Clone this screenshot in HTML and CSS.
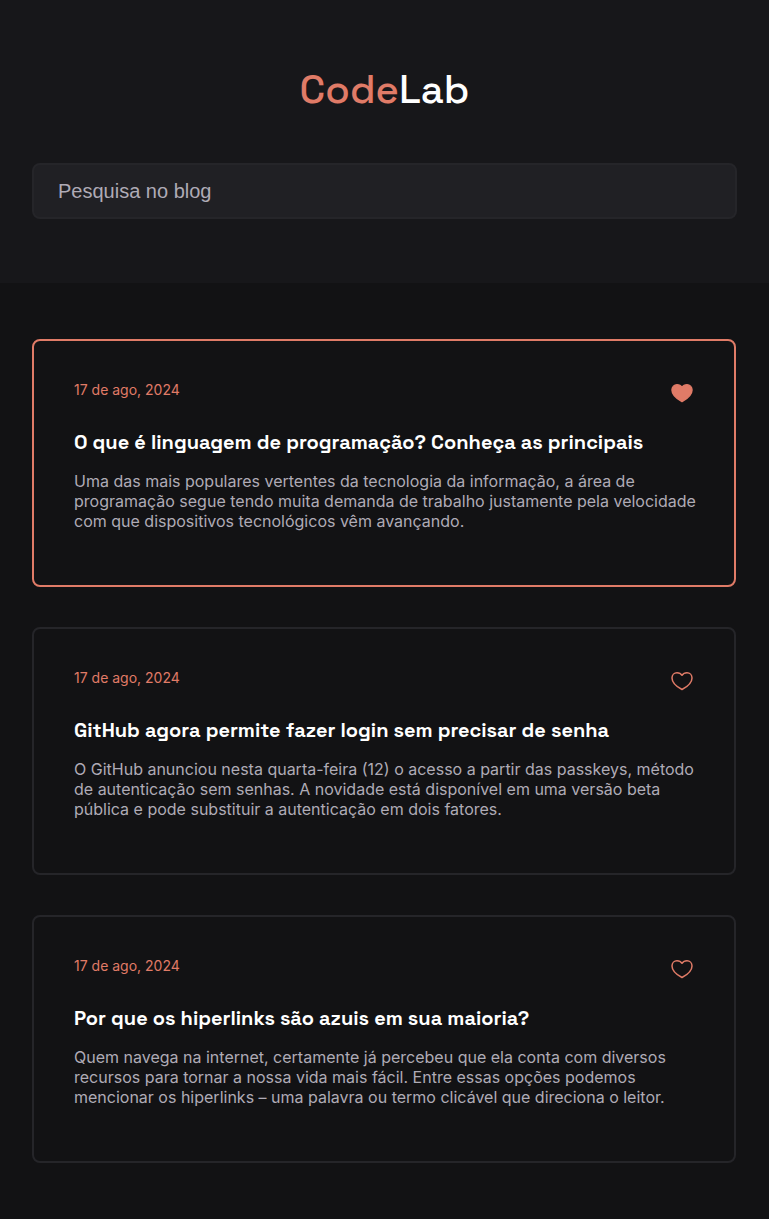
FILE: index.html
```html
<!DOCTYPE html>
<html lang="pt-BR">
<head>
<meta charset="utf-8">
<meta name="viewport" content="width=device-width, initial-scale=1">
<title>CodeLab</title>
<link rel="stylesheet" href="styles.css">
</head>
<body>
<svg class="sprite" aria-hidden="true">
  <symbol id="heart" viewBox="0 0 24 24">
    <path d="M12 20.5C9.6 19.2 2 14.8 2 8.9C2 5.9 4.2 3.7 7 3.7C9.1 3.7 10.9 4.6 12 6.3C13.1 4.6 14.9 3.7 17 3.7C19.8 3.7 22 5.9 22 8.9C22 14.8 14.4 19.2 12 20.5Z"/>
  </symbol>
</svg>
<header class="header">
  <h1 class="logo"><span class="logo-accent">Code</span>Lab</h1>
  <input class="search" type="search" placeholder="Pesquisa no blog" aria-label="Pesquisa no blog">
</header>
<main class="posts">
  <article class="card card-liked">
    <div class="card-top">
      <time class="date" datetime="2024-08-17">17 de ago, 2024</time>
      <button class="like" type="button" aria-label="Descurtir" aria-pressed="true"><svg class="heart heart-filled"><use href="#heart"/></svg></button>
    </div>
    <h2 class="title">O que é linguagem de programação? Conheça as principais</h2>
    <p class="summary">Uma das mais populares vertentes da tecnologia da informação, a área de programação segue tendo muita demanda de trabalho justamente pela velocidade com que dispositivos tecnológicos vêm avançando.</p>
  </article>
  <article class="card">
    <div class="card-top">
      <time class="date" datetime="2024-08-17">17 de ago, 2024</time>
      <button class="like" type="button" aria-label="Curtir" aria-pressed="false"><svg class="heart"><use href="#heart"/></svg></button>
    </div>
    <h2 class="title">GitHub agora permite fazer login sem precisar de senha</h2>
    <p class="summary">O GitHub anunciou nesta quarta-feira (12) o acesso a partir das passkeys, método de autenticação sem senhas. A novidade está disponível em uma versão beta pública e pode substituir a autenticação em dois fatores.</p>
  </article>
  <article class="card">
    <div class="card-top">
      <time class="date" datetime="2024-08-17">17 de ago, 2024</time>
      <button class="like" type="button" aria-label="Curtir" aria-pressed="false"><svg class="heart"><use href="#heart"/></svg></button>
    </div>
    <h2 class="title">Por que os hiperlinks são azuis em sua maioria?</h2>
    <p class="summary">Quem navega na internet, certamente já percebeu que ela conta com diversos recursos para tornar a nossa vida mais fácil. Entre essas opções podemos mencionar os hiperlinks – uma palavra ou termo clicável que direciona o leitor.</p>
  </article>
</main>
</body>
</html>
```

FILE: styles.css
```css
:root {
  --accent: #e07b67;
  --bg: #121214;
  --bg-header: #17171a;
  --bg-input: #202024;
  --line: #252529;
  --muted: #afabb6;
}

* {
  box-sizing: border-box;
  margin: 0;
}

body {
  background: var(--bg);
  color: #fff;
  font-family: Inter, sans-serif;
}

.sprite {
  display: none;
}

.header {
  display: flex;
  flex-direction: column;
  align-items: center;
  gap: 48px;
  padding: 64px 32px;
  background: var(--bg-header);
}

.logo {
  font-family: "Space Grotesk", Inter, sans-serif;
  font-size: 40px;
  font-weight: 500;
  line-height: 51px;
}

.logo-accent {
  color: var(--accent);
}

.search {
  width: 100%;
  height: 56px;
  padding: 0 24px;
  border: 2px solid var(--line);
  border-radius: 8px;
  background: var(--bg-input);
  color: #fff;
  font-family: "Liberation Sans", Arial, sans-serif;
  font-size: 20px;
  appearance: none;
}

.search::placeholder {
  color: var(--muted);
}

.posts {
  display: grid;
  gap: 40px;
  padding: 56px 33px 56px 32px;
}

.card {
  min-height: 248px;
  padding: 40px 32px 40px 40px;
  border: 2px solid var(--line);
  border-radius: 8px;
}

.card-liked {
  border-color: var(--accent);
}

.card-top {
  display: flex;
  justify-content: space-between;
  align-items: flex-start;
  margin-bottom: 24px;
  padding-right: 8px;
}

.date {
  color: var(--accent);
  font-size: 14px;
  line-height: 18px;
}

.like {
  padding: 0;
  border: 0;
  background: none;
  cursor: pointer;
}

.heart {
  display: block;
  width: 24px;
  height: 24px;
  fill: none;
  stroke: var(--accent);
  stroke-width: 1.5;
  stroke-linejoin: round;
}

.heart-filled {
  fill: var(--accent);
}

.title {
  margin-bottom: 16px;
  font-family: "Space Grotesk", Inter, sans-serif;
  font-size: 20px;
  font-weight: 700;
  line-height: 26px;
}

.summary {
  color: var(--muted);
  font-size: 16px;
  line-height: 20px;
}
```
